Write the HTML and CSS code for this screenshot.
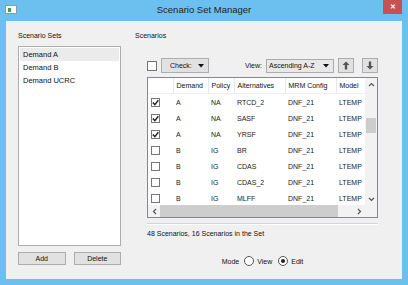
FILE: index.html
```html
<!DOCTYPE html>
<html lang="en">
<head>
  <meta charset="UTF-8">
  <title>Scenario Set Manager</title>
  <link rel="stylesheet" href="styles.css">
</head>
<body>
  <div class="window">
    <div class="titlebar">
      <span class="app-icon"><span class="app-icon-pane"></span></span>
      <span class="title">Scenario Set Manager</span>
      <span class="close">&#x2715;</span>
    </div>

    <div class="client">
      <!-- left: scenario sets -->
      <div class="sets">
        <div class="label">Scenario Sets</div>
        <ul class="set-list">
          <li class="selected">Demand A</li>
          <li>Demand B</li>
          <li>Demand UCRC</li>
        </ul>
        <div class="set-buttons">
          <button class="btn">Add</button>
          <button class="btn">Delete</button>
        </div>
      </div>

      <!-- right: scenarios -->
      <div class="scenarios">
        <div class="label">Scenarios</div>
        <div class="scen-body">
          <div class="toolbar">
            <span class="chk"></span>
            <button class="btn check-btn">Check: <svg class="drop" width="6" height="4" viewBox="0 0 6 4"><path d="M0 0H6L3 3.5Z" fill="#111"/></svg></button>
            <span class="spacer"></span>
            <span class="view-label">View:</span>
            <span class="combo">Ascending A-Z <svg class="drop" width="6" height="4" viewBox="0 0 6 4"><path d="M0 0H6L3 3.5Z" fill="#111"/></svg></span>
            <button class="btn arrow-btn"><svg width="8" height="9" viewBox="0 0 8 9"><path d="M4 0.5L0.5 4H2.8V8.5H5.2V4H7.5Z" fill="#555"/></svg></button>
            <button class="btn arrow-btn down"><svg width="8" height="9" viewBox="0 0 8 9"><path d="M4 8.5L0.5 5H2.8V0.5H5.2V5H7.5Z" fill="#555"/></svg></button>
          </div>

          <div class="grid">
            <div class="grid-area">
              <table class="scen-table">
                <colgroup>
                  <col style="width:25px"><col style="width:35px"><col style="width:26px">
                  <col style="width:51px"><col style="width:51px"><col style="width:52px">
                </colgroup>
                <thead>
                  <tr><th></th><th>Demand</th><th>Policy</th><th>Alternatives</th><th>MRM Config</th><th>Model</th></tr>
                </thead>
                <tbody>
                  <tr><td><span class="chk sm on"><svg width="7" height="7" viewBox="0 0 7 7"><path d="M0.8 3.6L2.8 5.6L6.3 1.2" fill="none" stroke="#222" stroke-width="1.4"/></svg></span></td><td>A</td><td>NA</td><td>RTCD_2</td><td>DNF_21</td><td>LTEMP</td></tr>
                  <tr><td><span class="chk sm on"><svg width="7" height="7" viewBox="0 0 7 7"><path d="M0.8 3.6L2.8 5.6L6.3 1.2" fill="none" stroke="#222" stroke-width="1.4"/></svg></span></td><td>A</td><td>NA</td><td>SASF</td><td>DNF_21</td><td>LTEMP</td></tr>
                  <tr><td><span class="chk sm on"><svg width="7" height="7" viewBox="0 0 7 7"><path d="M0.8 3.6L2.8 5.6L6.3 1.2" fill="none" stroke="#222" stroke-width="1.4"/></svg></span></td><td>A</td><td>NA</td><td>YRSF</td><td>DNF_21</td><td>LTEMP</td></tr>
                  <tr><td><span class="chk sm"></span></td><td>B</td><td>IG</td><td>BR</td><td>DNF_21</td><td>LTEMP</td></tr>
                  <tr><td><span class="chk sm"></span></td><td>B</td><td>IG</td><td>CDAS</td><td>DNF_21</td><td>LTEMP</td></tr>
                  <tr><td><span class="chk sm"></span></td><td>B</td><td>IG</td><td>CDAS_2</td><td>DNF_21</td><td>LTEMP</td></tr>
                  <tr><td><span class="chk sm"></span></td><td>B</td><td>IG</td><td>MLFF</td><td>DNF_21</td><td>LTEMP</td></tr>
                </tbody>
              </table>
            </div>

            <div class="vscroll">
              <span class="sb-btn"><svg width="7" height="5" viewBox="0 0 7 5"><path d="M1 4L3.5 1.5L6 4" fill="none" stroke="#555" stroke-width="1.2"/></svg></span>
              <span class="sb-gap top"></span>
              <span class="sb-thumb"></span>
              <span class="sb-gap"></span>
              <span class="sb-btn"><svg width="7" height="5" viewBox="0 0 7 5"><path d="M1 1L3.5 3.5L6 1" fill="none" stroke="#555" stroke-width="1.2"/></svg></span>
            </div>

            <div class="hscroll">
              <span class="sb-btn"><svg width="5" height="7" viewBox="0 0 5 7"><path d="M4 1L1.5 3.5L4 6" fill="none" stroke="#555" stroke-width="1.2"/></svg></span>
              <span class="sb-thumb"></span>
              <span class="sb-gap"></span>
              <span class="sb-btn"><svg width="5" height="7" viewBox="0 0 5 7"><path d="M1 1L3.5 3.5L1 6" fill="none" stroke="#555" stroke-width="1.2"/></svg></span>
            </div>
            <div class="corner"></div>
          </div>

          <div class="sep"></div>
          <div class="status">48 Scenarios, 16 Scenarios in the Set</div>

          <div class="mode">
            <span>Mode</span>
            <span class="radio"></span><span class="radio-label">View</span>
            <span class="radio on"></span><span class="radio-label">Edit</span>
          </div>
        </div>
      </div>
    </div>
  </div>
</body>
</html>
```

FILE: styles.css
```css
/* window frame */
body {
  margin: 0;
  font-family: "Liberation Sans", Arial, sans-serif;
  font-size: 7px;
  color: #111;
}

.window {
  width: 408px;
  height: 285px;
  background: #6bc0ef;
  display: flex;
  flex-direction: column;
}

.titlebar {
  height: 21px;
  flex: none;
  display: grid;
  grid-template-columns: 1fr auto 1fr;
}

.app-icon {
  margin: 5px 0 0 5px;
  width: 10px;
  height: 7px;
  background: #fff;
  border: 1px solid #8a9ba8;
  display: flex;
  align-items: center;
}

.app-icon-pane {
  width: 3px;
  height: 4px;
  margin-left: 2px;
  background: #2fa84f;
}

.title {
  font-size: 9.5px;
  line-height: 20px;
  color: #222;
}

.close {
  justify-self: end;
  width: 19px;
  height: 14px;
  margin-right: 6px;
  background: #c75050;
  color: #fff;
  font-size: 7px;
  font-weight: bold;
  display: flex;
  align-items: center;
  justify-content: center;
}

.client {
  flex: 1;
  margin: 0 6px 6px;
  background: #f0f0f0;
  display: flex;
  gap: 14px;
  padding: 10px 24px 0 12px;
}

.label {
  height: 10px;
  line-height: 10px;
}

/* scenario sets */
.sets {
  width: 103px;
  display: flex;
  flex-direction: column;
}

.set-list {
  margin: 5px 0 0;
  padding: 1px 1px;
  list-style: none;
  height: 200px;
  box-sizing: border-box;
  border: 1px solid #abadb3;
  background: #fff;
  font-size: 7.5px;
}

.set-list li {
  height: 13px;
  line-height: 13px;
  padding-left: 3px;
}

.set-list li.selected {
  background: #ebebeb;
}

.set-buttons {
  margin-top: 6px;
  display: grid;
  grid-template-columns: 1fr 1fr;
  gap: 8px;
}

.btn {
  height: 13px;
  padding: 0;
  border: 1px solid #adadad;
  background: #e1e1e1;
  font-family: inherit;
  font-size: 7px;
  color: #111;
}

/* scenarios */
.scenarios {
  flex: 1;
}

.scen-body {
  margin: 17px 0 0 12px;
}

.toolbar {
  height: 15px;
  display: flex;
  align-items: center;
}

.chk {
  width: 10px;
  height: 10px;
  box-sizing: border-box;
  border: 1px solid #767676;
  background: #fff;
  display: inline-flex;
  align-items: center;
  justify-content: center;
}

.chk.sm {
  width: 9px;
  height: 9px;
  vertical-align: middle;
}

.check-btn {
  margin-left: 4px;
  width: 48px;
  height: 15px;
  display: flex;
  align-items: center;
  justify-content: space-between;
  padding: 0 4px 0 8px;
}

.spacer {
  flex: 1;
}

.view-label {
  margin-right: 4px;
}

.combo {
  width: 68px;
  height: 14px;
  box-sizing: border-box;
  border: 1px solid #acacac;
  background: #e8e8e8;
  display: flex;
  align-items: center;
  justify-content: space-between;
  padding: 0 4px 0 2px;
}

.arrow-btn {
  margin-left: 4px;
  width: 16px;
  height: 15px;
  display: flex;
  align-items: center;
  justify-content: center;
}

.arrow-btn.down {
  margin-left: 8px;
}

/* grid */
.grid {
  margin-top: 4px;
  height: 141px;
  box-sizing: border-box;
  border: 1px solid #828790;
  background: #fff;
  display: grid;
  grid-template-columns: 1fr 12px;
  grid-template-rows: 1fr 12px;
}

.grid-area {
  overflow: hidden;
}

.scen-table {
  table-layout: fixed;
  border-collapse: collapse;
  width: 240px;
  font-size: 7px;
}

.scen-table th {
  height: 15px;
  padding: 0 3px;
  font-weight: normal;
  text-align: left;
  white-space: nowrap;
  border-right: 1px solid #e4e9f0;
  border-bottom: 1px solid #eef0f3;
}

.scen-table td {
  height: 16px;
  padding: 0 3px;
  white-space: nowrap;
  color: #1a1a1a;
}

.scen-table td:first-child {
  padding-left: 3px;
}

.vscroll {
  background: #f2f2f2;
  display: flex;
  flex-direction: column;
}

.hscroll {
  background: #f2f2f2;
  display: flex;
}

.sb-btn {
  flex: none;
  width: 12px;
  height: 12px;
  display: flex;
  align-items: center;
  justify-content: center;
}

.vscroll .sb-gap.top {
  height: 28px;
  flex: none;
}

.vscroll .sb-gap {
  flex: 1;
}

.vscroll .sb-thumb {
  height: 15px;
  margin: 0 1px;
  background: #cdcdcd;
}

.hscroll .sb-thumb {
  width: 178px;
  background: #cdcdcd;
}

.hscroll .sb-gap {
  flex: 1;
}

.corner {
  background: #f2f2f2;
}

.sep {
  margin-top: 5px;
  border-top: 1px solid #d5d5d5;
  border-bottom: 1px solid #fff;
}

.status {
  margin-top: 4px;
  height: 10px;
  line-height: 10px;
}

.mode {
  margin-top: 16px;
  height: 12px;
  display: flex;
  align-items: center;
  justify-content: center;
}

.radio {
  width: 10px;
  height: 10px;
  box-sizing: border-box;
  border: 1px solid #555;
  border-radius: 50%;
  background: #fff;
  margin: 0 3px 0 5px;
  display: flex;
  align-items: center;
  justify-content: center;
}

.radio.on::after {
  content: "";
  width: 4px;
  height: 4px;
  border-radius: 50%;
  background: #222;
}

.radio-label + .radio {
  margin-left: 6px;
}
```
